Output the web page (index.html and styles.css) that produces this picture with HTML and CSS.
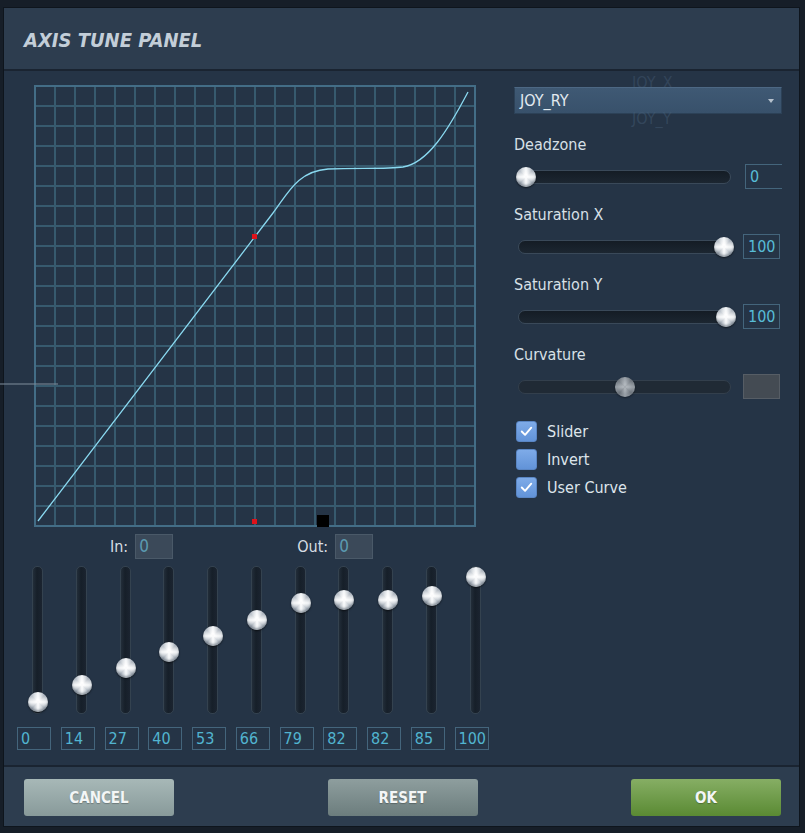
FILE: index.html
```html
<!DOCTYPE html>
<html>
<head>
<meta charset="utf-8">
<title>Axis Tune Panel</title>
<link rel="stylesheet" href="styles.css">
</head>
<body>
<div class="panel">
  <header class="titlebar"><h1 class="title">AXIS TUNE PANEL</h1></header>
  <main class="content">
    <section class="left">
      <svg class="graph" width="442" height="442" viewBox="0 0 442 442">
        <path class="grid" d="M21 0V442M41 0V442M61 0V442M81 0V442M101 0V442M121 0V442M141 0V442M161 0V442M181 0V442M201 0V442M221 0V442M241 0V442M261 0V442M281 0V442M301 0V442M321 0V442M341 0V442M361 0V442M381 0V442M401 0V442M421 0V442M0 21H442M0 41H442M0 61H442M0 81H442M0 101H442M0 121H442M0 141H442M0 161H442M0 181H442M0 201H442M0 221H442M0 241H442M0 261H442M0 281H442M0 301H442M0 321H442M0 341H442M0 361H442M0 381H442M0 401H442M0 421H442"/>
        <rect class="frame" x="1" y="1" width="440" height="440"/>
        <path class="curve" d="M4 436L239 128C254 108 264 86 294 84C329 83 354 84 369 82C394 78 414 45 434 7"/>
        <rect class="pt" x="218" y="149" width="5" height="5"/>
        <rect class="pt" x="218" y="434" width="5" height="5"/>
        <rect class="marker" x="283" y="430" width="12" height="12"/>
      </svg>
      <div class="io-row">
        <span class="io-label">In:</span><span class="io-field">0</span>
        <span class="io-label out">Out:</span><span class="io-field">0</span>
      </div>
      <div class="vsliders">
        <div class="vcol"><div class="vtrack"><span class="knob" style="--v:0"></span></div><div class="vbox">0</div></div>
        <div class="vcol"><div class="vtrack"><span class="knob" style="--v:14"></span></div><div class="vbox">14</div></div>
        <div class="vcol"><div class="vtrack"><span class="knob" style="--v:27"></span></div><div class="vbox">27</div></div>
        <div class="vcol"><div class="vtrack"><span class="knob" style="--v:40"></span></div><div class="vbox">40</div></div>
        <div class="vcol"><div class="vtrack"><span class="knob" style="--v:53"></span></div><div class="vbox">53</div></div>
        <div class="vcol"><div class="vtrack"><span class="knob" style="--v:66"></span></div><div class="vbox">66</div></div>
        <div class="vcol"><div class="vtrack"><span class="knob" style="--v:79"></span></div><div class="vbox">79</div></div>
        <div class="vcol"><div class="vtrack"><span class="knob" style="--v:82"></span></div><div class="vbox">82</div></div>
        <div class="vcol"><div class="vtrack"><span class="knob" style="--v:82"></span></div><div class="vbox">82</div></div>
        <div class="vcol"><div class="vtrack"><span class="knob" style="--v:85"></span></div><div class="vbox">85</div></div>
        <div class="vcol"><div class="vtrack"><span class="knob" style="--v:100"></span></div><div class="vbox">100</div></div>
      </div>
    </section>
    <section class="right">
      <div class="select-wrap">
        <span class="ghost ghost-x">JOY_X</span>
        <div class="select">JOY_RY<span class="caret"></span></div>
        <span class="ghost ghost-y">JOY_Y</span>
      </div>
      <div class="group first">
        <div class="label">Deadzone</div>
        <div class="hrow"><div class="htrack"><span class="knob" style="left:-3px"></span></div><div class="hbox wide">0</div></div>
      </div>
      <div class="group">
        <div class="label">Saturation X</div>
        <div class="hrow"><div class="htrack"><span class="knob" style="left:195px"></span></div><div class="hbox">100</div></div>
      </div>
      <div class="group">
        <div class="label">Saturation Y</div>
        <div class="hrow"><div class="htrack"><span class="knob" style="left:197px"></span></div><div class="hbox">100</div></div>
      </div>
      <div class="group">
        <div class="label">Curvature</div>
        <div class="hrow disabled"><div class="htrack"><span class="knob" style="left:96px"></span></div><div class="hbox"></div></div>
      </div>
      <div class="checks">
        <div class="check"><span class="box on"><svg width="20" height="20" viewBox="0 0 20 20"><path d="M5 10.5L8.5 14L15 6.5"/></svg></span>Slider</div>
        <div class="check"><span class="box"></span>Invert</div>
        <div class="check"><span class="box on"><svg width="20" height="20" viewBox="0 0 20 20"><path d="M5 10.5L8.5 14L15 6.5"/></svg></span>User Curve</div>
      </div>
    </section>
  </main>
  <footer class="footer">
    <button class="btn cancel">CANCEL</button>
    <button class="btn reset">RESET</button>
    <button class="btn ok">OK</button>
  </footer>
</div>
<div class="stray-line"></div>
</body>
</html>
```

FILE: styles.css
```css
html, body {
  margin: 0;
  padding: 0;
}

body {
  width: 805px;
  height: 833px;
  overflow: hidden;
  position: relative;
  background: #161e28;
  font-family: "DejaVu Sans Condensed", "DejaVu Sans", sans-serif;
  font-stretch: condensed;
  color: #dce4ea;
}

.panel {
  margin: 7px 0 0 3px;
  width: 797px;
  height: 820px;
  box-sizing: border-box;
  border: 1px solid #0e151d;
  background: #253446;
  display: flex;
  flex-direction: column;
}

.titlebar {
  flex: none;
  height: 63px;
  box-sizing: border-box;
  background: #2d3d4f;
  border-bottom: 2px solid #1a2431;
  display: flex;
  align-items: center;
  padding: 3px 0 0 20px;
}

.title {
  margin: 0;
  font-size: 20px;
  font-weight: bold;
  font-style: italic;
  color: #c3ced8;
}

.content {
  flex: 1;
  display: grid;
  grid-template-columns: 498px 268px;
  padding-left: 12px;
}

/* ---------- left column ---------- */
.left {
  padding-top: 14px;
}

.graph {
  display: block;
  margin-left: 18px;
}

.grid {
  stroke: #375a6e;
  stroke-width: 2;
  fill: none;
}

.frame {
  fill: none;
  stroke: #436d86;
  stroke-width: 2;
}

.curve {
  fill: none;
  stroke: #8ad9f0;
  stroke-width: 1.3;
}

.pt { fill: #e0121a; }
.marker { fill: #000; }

.io-row {
  display: flex;
  align-items: center;
  margin-top: 7px;
  height: 25px;
  padding-left: 94px;
  font-size: 16px;
}

.io-label { color: #d6dde3; }
.io-label.out { margin-left: 124px; }

.io-field {
  box-sizing: border-box;
  width: 38px;
  height: 25px;
  margin-left: 7px;
  background: #3b4959;
  border: 1px solid #4a5968;
  color: #5b9bb2;
  font-size: 17px;
  line-height: 23px;
  padding-left: 3px;
}

.vsliders {
  display: grid;
  grid-template-columns: repeat(11, 43.75px);
  margin-top: 7px;
}

.vcol {
  display: flex;
  flex-direction: column;
  align-items: flex-start;
}

.vtrack {
  position: relative;
  box-sizing: border-box;
  width: 11px;
  height: 148px;
  margin-left: 16px;
  background: linear-gradient(90deg, #222d39, #161f29 45%, #1b2430);
  border: 1px solid #34424f;
  border-radius: 5px;
}

.knob {
  position: absolute;
  width: 20px;
  height: 20px;
  border-radius: 50%;
  background:
    radial-gradient(circle at 50% 45%, rgba(255,255,255,0.95) 0 12%, rgba(255,255,255,0) 55%),
    conic-gradient(#f7f9fb, #a9b1bb 12%, #f2f4f6 25%, #b3bbc4 37%, #f7f9fb 50%, #a9b1bb 62%, #f2f4f6 75%, #b3bbc4 87%, #f7f9fb);
  box-shadow: 0 1px 2px rgba(0,0,0,0.55), inset 0 -2px 2px rgba(60,70,85,0.45);
}

.vtrack .knob {
  left: -5px;
  top: calc(125px - 1.25px * var(--v));
}

.vbox {
  box-sizing: border-box;
  width: 34px;
  height: 23px;
  margin: 13px 0 0 1px;
  border: 1px solid #44657c;
  color: #52b4d0;
  font-size: 16px;
  line-height: 21px;
  padding-left: 3px;
}

/* ---------- right column ---------- */
.right {
  padding-top: 16px;
  overflow: hidden;
}

.select-wrap {
  position: relative;
}

.select {
  position: relative;
  z-index: 1;
  box-sizing: border-box;
  height: 27px;
  background: linear-gradient(#3f5974, #38516b);
  border: 1px solid #2c4157;
  border-top-color: #4d6884;
  color: #e3eaf0;
  font-size: 16px;
  line-height: 25px;
  padding-left: 5px;
}

.caret {
  position: absolute;
  right: 7px;
  top: 11px;
  width: 0;
  height: 0;
  border-left: 3.5px solid transparent;
  border-right: 3.5px solid transparent;
  border-top: 4px solid #b7c2ce;
}

.ghost {
  position: absolute;
  left: 118px;
  font-size: 16px;
  color: #33455a;
}

.ghost-x { top: -14px; }
.ghost-y { top: 22px; z-index: 2; color: rgba(70, 95, 120, 0.45); }

.group {
  margin-top: 17px;
}

.group.first {
  margin-top: 22px;
}

.label {
  height: 18px;
  line-height: 18px;
  font-size: 16px;
  color: #d8e0e6;
}

.hrow {
  display: flex;
  align-items: center;
  height: 25px;
  margin-top: 10px;
}

.htrack {
  position: relative;
  flex: none;
  box-sizing: border-box;
  width: 213px;
  height: 14px;
  margin-left: 4px;
  background: linear-gradient(#141c25, #1c2631);
  border: 1px solid #3a4959;
  border-radius: 7px;
}

.htrack .knob {
  top: -4px;
}

.hbox {
  box-sizing: border-box;
  width: 37px;
  height: 25px;
  margin-left: 12px;
  border: 1px solid #44657c;
  color: #58bcd6;
  font-size: 16px;
  line-height: 23px;
  padding-left: 4px;
  flex: none;
}

.hbox.wide {
  width: 44px;
  margin-left: 14px;
}

.hrow.disabled .htrack {
  background: #202a35;
  border-color: #333f4c;
}

.hrow.disabled .knob {
  background:
    radial-gradient(circle at 50% 45%, rgba(200,205,210,0.6) 0 12%, rgba(200,205,210,0) 55%),
    conic-gradient(#9aa1a8, #6c737b 12%, #979ea5 25%, #70777f 37%, #9aa1a8 50%, #6c737b 62%, #979ea5 75%, #70777f 87%, #9aa1a8);
  box-shadow: 0 1px 2px rgba(0,0,0,0.4);
}

.hrow.disabled .hbox {
  background: #444b53;
  border-color: #565d65;
}

.checks {
  margin-top: 18px;
}

.check {
  display: flex;
  align-items: center;
  height: 28px;
  font-size: 16px;
  color: #dee5eb;
}

.box {
  box-sizing: border-box;
  width: 21px;
  height: 21px;
  margin: 0 10px 0 2px;
  border-radius: 3px;
  background: linear-gradient(#7eabe8, #6293d8);
  border: 1px solid #5a86c4;
  display: flex;
  align-items: center;
  justify-content: center;
}

.box svg {
  display: block;
}

.box path {
  fill: none;
  stroke: #ffffff;
  stroke-width: 2;
  stroke-linecap: round;
  stroke-linejoin: round;
}

/* ---------- footer ---------- */
.footer {
  flex: none;
  height: 61px;
  box-sizing: border-box;
  background: #2d3d4f;
  border-top: 2px solid #1a2431;
  padding: 12px 18px 0 20px;
  display: flex;
  justify-content: space-between;
  align-items: flex-start;
}

.btn {
  width: 150px;
  height: 37px;
  border: none;
  border-radius: 3px;
  font-family: "DejaVu Sans Condensed", "DejaVu Sans", sans-serif;
  font-stretch: condensed;
  font-weight: bold;
  font-size: 15px;
  color: #f3f6f6;
  text-shadow: 0 1px 1px rgba(0,0,0,0.25);
  padding: 0;
}

.btn.cancel { background: linear-gradient(#a7b8b7, #889a9a); }
.btn.reset  { background: linear-gradient(#8e9e9e, #6c7d7d); }
.btn.ok     { background: linear-gradient(#86ae64, #5a8a33); }

.stray-line {
  position: absolute;
  left: 0;
  top: 383px;
  width: 58px;
  height: 2px;
  background: rgba(120, 135, 150, 0.55);
}
```
